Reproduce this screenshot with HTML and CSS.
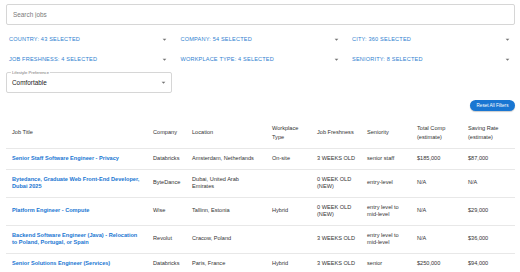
FILE: index.html
```html
<!DOCTYPE html>
<html lang="en">
<head>
  <meta charset="UTF-8">
  <title>Jobs</title>
  <link rel="stylesheet" href="styles.css">
</head>
<body>
  <div class="page">
    <input class="search" type="text" placeholder="Search jobs">

    <div class="filters">
      <div class="filter"><span>Country: 43 selected</span><svg viewBox="0 0 24 24"><path d="M7 10l5 5 5-5z"/></svg></div>
      <div class="filter"><span>Company: 54 selected</span><svg viewBox="0 0 24 24"><path d="M7 10l5 5 5-5z"/></svg></div>
      <div class="filter"><span>City: 360 selected</span><svg viewBox="0 0 24 24"><path d="M7 10l5 5 5-5z"/></svg></div>
      <div class="filter"><span>Job freshness: 4 selected</span><svg viewBox="0 0 24 24"><path d="M7 10l5 5 5-5z"/></svg></div>
      <div class="filter"><span>Workplace type: 4 selected</span><svg viewBox="0 0 24 24"><path d="M7 10l5 5 5-5z"/></svg></div>
      <div class="filter"><span>Seniority: 8 selected</span><svg viewBox="0 0 24 24"><path d="M7 10l5 5 5-5z"/></svg></div>
    </div>

    <div class="select">
      <label class="select-label">Lifestyle Preference</label>
      <span>Comfortable</span>
      <svg viewBox="0 0 24 24"><path d="M7 10l5 5 5-5z"/></svg>
    </div>

    <div class="actions">
      <button class="reset">Reset All Filters</button>
    </div>

    <table class="jobs">
      <colgroup>
        <col style="width:141px"><col style="width:39px"><col style="width:80px"><col style="width:45px">
        <col style="width:50px"><col style="width:50px"><col style="width:51px"><col style="width:53px">
      </colgroup>
      <thead>
        <tr>
          <th>Job Title</th>
          <th>Company</th>
          <th>Location</th>
          <th>Workplace Type</th>
          <th>Job Freshness</th>
          <th>Seniority</th>
          <th>Total Comp (estimate)</th>
          <th>Saving Rate (estimate)</th>
        </tr>
      </thead>
      <tbody>
        <tr>
          <td><a class="title">Senior Staff Software Engineer - Privacy</a></td>
          <td>Databricks</td>
          <td>Amsterdam, Netherlands</td>
          <td>On-site</td>
          <td>3 WEEKS OLD</td>
          <td>senior staff</td>
          <td>$185,000</td>
          <td>$87,000</td>
        </tr>
        <tr>
          <td><a class="title">Bytedance, Graduate Web Front-End Developer, Dubai 2025</a></td>
          <td>ByteDance</td>
          <td>Dubai, United Arab Emirates</td>
          <td></td>
          <td>0 WEEK OLD (NEW)</td>
          <td>entry-level</td>
          <td>N/A</td>
          <td>N/A</td>
        </tr>
        <tr>
          <td><a class="title">Platform Engineer - Compute</a></td>
          <td>Wise</td>
          <td>Tallinn, Estonia</td>
          <td>Hybrid</td>
          <td>0 WEEK OLD (NEW)</td>
          <td>entry level to mid-level</td>
          <td>N/A</td>
          <td>$29,000</td>
        </tr>
        <tr>
          <td><a class="title">Backend Software Engineer (Java) - Relocation to Poland, Portugal, or Spain</a></td>
          <td>Revolut</td>
          <td>Cracow, Poland</td>
          <td></td>
          <td>3 WEEKS OLD</td>
          <td>entry level to mid-level</td>
          <td>N/A</td>
          <td>$36,000</td>
        </tr>
        <tr>
          <td><a class="title">Senior Solutions Engineer (Services)</a></td>
          <td>Databricks</td>
          <td>Paris, France</td>
          <td>Hybrid</td>
          <td>3 WEEKS OLD</td>
          <td>senior</td>
          <td>$250,000</td>
          <td>$94,000</td>
        </tr>
      </tbody>
    </table>
  </div>
</body>
</html>
```

FILE: styles.css
```css
* {
  margin: 0;
  padding: 0;
  box-sizing: border-box;
}

body {
  background: #fff;
  font-family: 'Liberation Sans', Arial, sans-serif;
  color: #333;
}

.page {
  padding: 4px 5px 0 6px;
}

.search {
  display: block;
  width: 100%;
  height: 21px;
  border: 1px solid #d6d6d6;
  border-radius: 2px;
  padding: 0 6px;
  font-family: inherit;
  font-size: 6.4px;
  outline: none;
}

.search::placeholder {
  color: #7a7a7a;
}

.filters {
  display: grid;
  grid-template-columns: repeat(3, 1fr);
  column-gap: 5.5px;
  margin-top: 4px;
}

.filter {
  height: 20px;
  display: flex;
  align-items: center;
  justify-content: space-between;
  padding: 0 3px;
  color: #2f7fd0;
  font-size: 5.6px;
  letter-spacing: 0.03em;
  text-transform: uppercase;
}

.filter svg,
.select svg {
  width: 9px;
  height: 9px;
  fill: #757575;
}

.select {
  position: relative;
  width: 166px;
  height: 21px;
  margin-top: 3px;
  display: flex;
  align-items: center;
  justify-content: space-between;
  padding: 0 3px 0 5px;
  border: 1px solid #d6d6d6;
  border-radius: 2px;
  font-size: 6.4px;
  color: #222;
}

.select-label {
  position: absolute;
  top: -3px;
  left: 4px;
  padding: 0 1px;
  background: #fff;
  font-size: 4.2px;
  line-height: 5px;
  color: #777;
}

.actions {
  display: flex;
  justify-content: flex-end;
  margin-top: 7px;
}

.reset {
  height: 11px;
  width: 45px;
  border: none;
  border-radius: 6px;
  background: #1976d2;
  color: #fff;
  font-family: inherit;
  font-size: 4.6px;
  box-shadow: 0 1px 1px rgba(0, 0, 0, 0.2);
}

.jobs {
  width: 509px;
  margin-top: 6px;
  border-collapse: collapse;
  table-layout: fixed;
  font-size: 5.6px;
}

.jobs th {
  text-align: left;
  font-weight: 400;
  line-height: 9px;
  padding: 6.5px 6px;
  border-bottom: 1px solid #e8e8e8;
  vertical-align: middle;
}

.jobs td {
  line-height: 7.5px;
  padding: 6px 6px;
  border-bottom: 1px solid #e8e8e8;
  vertical-align: middle;
}

.title {
  color: #1976d2;
  font-weight: 700;
}
```
